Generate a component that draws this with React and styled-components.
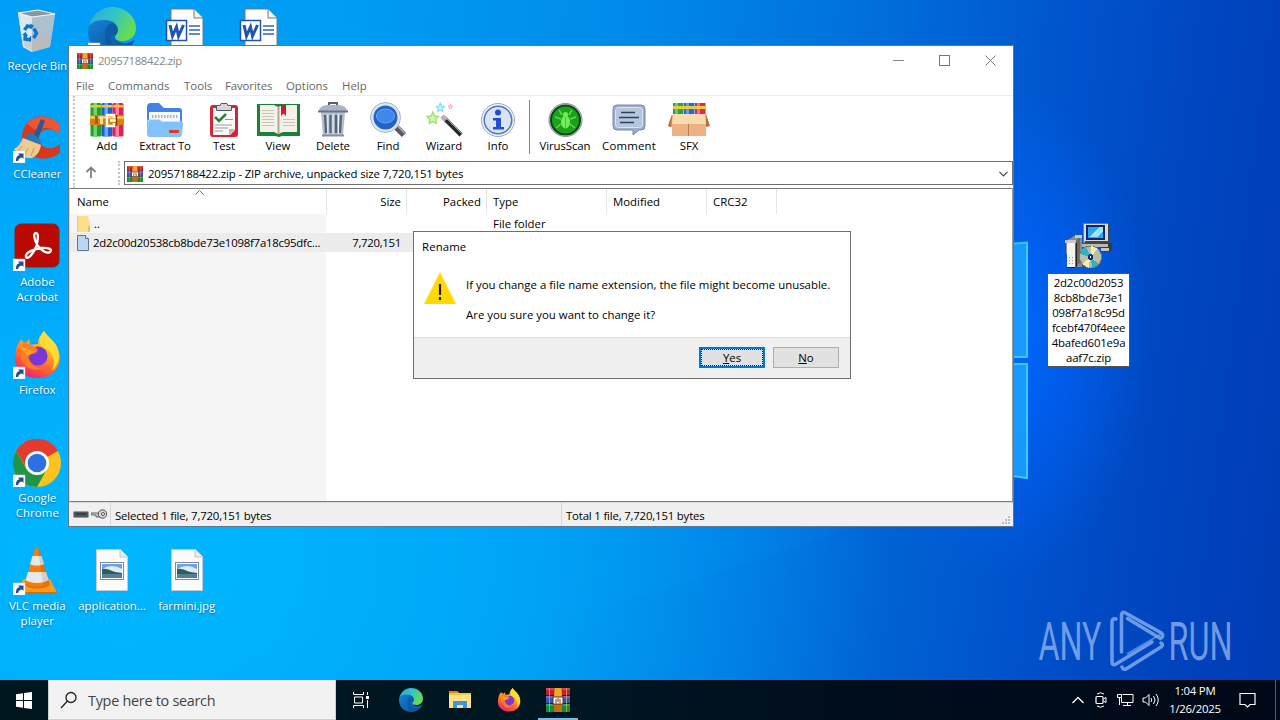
import React from 'react';
import styled, { createGlobalStyle, css } from 'styled-components';

const GlobalStyle = createGlobalStyle`
  * {
    box-sizing: border-box;
  }
  body {
    margin: 0;
    overflow: hidden;
    font-family: 'Open Sans', 'Noto Sans', sans-serif;
    font-size: 11.4px;
    line-height: 15px;
    color: #000;
  }
  svg {
    display: block;
    flex: none;
  }
`;

const Screen = styled.div`
  position: relative;
  display: flex;
  flex-direction: column;
  width: 1280px;
  height: 720px;
  overflow: hidden;
`;

const Desktop = styled.div`
  position: relative;
  height: 680px;
  background:
    radial-gradient(ellipse 150px 250px at 1000px 330px, rgba(0, 108, 255, .95), rgba(0, 100, 255, .6) 45%, rgba(0, 90, 240, 0) 100%),
    radial-gradient(ellipse 760px 560px at 130px 560px, rgba(0, 184, 255, .95), rgba(0, 180, 255, .6) 50%, rgba(0, 160, 255, 0) 100%),
    linear-gradient(97deg, #009ff7 0%, #009cf3 26%, #008bea 46%, #006fdc 64%, #0052cc 80%, #0044be 91%, #003cb4 100%);
`;

const Wallpaper = styled.svg`
  position: absolute;
  left: 0;
  top: 0;
`;

/* ---------- desktop icons ---------- */

const IconGrid = styled.div`
  position: relative;
  display: grid;
  grid-template-columns: repeat(4, 74.7px);
  grid-auto-rows: 108px;
  padding-top: 7px;
  width: 300px;
`;

const DesktopItem = styled.div`
  grid-column: ${props => props.$col};
  grid-row: ${props => props.$row};
  display: flex;
  flex-direction: column;
  align-items: center;
`;

const DesktopLabel = styled.div`
  margin-top: 3px;
  color: #fff;
  text-align: center;
  white-space: pre;
  letter-spacing: ${props => props.$ls || 0}px;
  text-shadow: 0 1px 2px rgba(0, 0, 0, .45);
`;

const InstallerItem = styled.div`
  position: absolute;
  left: 1047px;
  top: 221px;
  width: 83px;
  display: flex;
  flex-direction: column;
  align-items: center;
`;

const EditLabel = styled.div`
  width: 83px;
  margin-top: 4px;
  padding: 1px 0;
  border: 1px solid #555;
  background: #fff;
  text-align: center;
  white-space: pre;
  letter-spacing: -.18px;
`;

/* ---------- archive window ---------- */

const Window = styled.div`
  position: absolute;
  left: 68px;
  top: 45px;
  width: 946px;
  height: 482px;
  display: flex;
  flex-direction: column;
  border: 1px solid #5d7890;
  background: #fff;
`;

const TitleBar = styled.div`
  display: flex;
  align-items: center;
  height: 29px;
  padding: 0 17px 0 8px;
  color: #888;
`;

const Title = styled.div`
  flex: 1;
  margin-left: 5px;
  letter-spacing: -.4px;
`;

const WindowButtons = styled.div`
  display: flex;
  gap: 35px;
`;

const MenuBar = styled.div`
  display: flex;
  height: 21px;
  padding: 3px 7px 0;
  border-bottom: 1px solid #ececec;
  color: #666;
`;

const MenuItem = styled.div`
  width: ${props => props.$w}px;
  letter-spacing: ${props => props.$ls || 0}px;
`;

const Bars = styled.div`
  height: 92px;
  margin-left: 4px;
  border-left: 2px dotted #c6c6c6;
`;

const ToolBar = styled.div`
  display: flex;
  height: 65px;
  padding: 6px 0 0 5px;
`;

const Tool = styled.div`
  width: ${props => props.$w}px;
  display: flex;
  flex-direction: column;
  align-items: center;
  white-space: nowrap;
  letter-spacing: ${props => props.$ls || 0}px;
`;

const ToolDivider = styled.div`
  width: 1px;
  height: 54px;
  margin: -2px 5px 0 7px;
  background: #808080;
`;

const AddressRow = styled.div`
  display: flex;
  height: 24px;
`;

const UpButton = styled.div`
  width: 43px;
  padding: 5px 0 0 10px;
`;

const AddressGrip = styled.div`
  width: 6px;
  border-left: 2px dotted #c6c6c6;
`;

const AddressBox = styled.div`
  flex: 1;
  display: flex;
  align-items: center;
  padding: 1px 4px 0 2px;
  border: 1px solid #6e6e6e;
`;

const AddressText = styled.div`
  flex: 1;
  margin-left: 5px;
  letter-spacing: -.15px;
`;

const FileList = styled.div`
  flex: 1;
  position: relative;
  border: 1px solid #7c7c7c;
  border-right-color: #9a9a9a;
  border-left-color: #d8d8d8;
`;

const ListHeader = styled.div`
  display: flex;
  height: 25px;
`;

const HeadCell = styled.div`
  width: ${props => props.$w}px;
  padding: ${props => (props.$right ? '5px 5px 0 0' : '5px 0 0 6px')};
  border-right: 1px solid #e5e5e5;
  text-align: ${props => (props.$right ? 'right' : 'left')};

  &:first-child {
    padding-left: 7px;
  }
`;

const SortMark = styled.svg`
  position: absolute;
  left: 125px;
  top: 1px;
`;

const ListBody = styled.div`
  height: 287px;
  background: linear-gradient(90deg, #f5f5f5 256px, #fff 256px);
`;

const FileRow = styled.div`
  display: flex;
  align-items: center;
  width: 706px;
  height: 19px;
  ${props => props.$selected && css`
    background: #ececec;
  `}
`;

const FileCell = styled.div`
  display: flex;
  align-items: center;
  gap: 4px;
  width: ${props => props.$w}px;
  padding: 0 6px;
  white-space: nowrap;
  justify-content: ${props => (props.$right ? 'flex-end' : 'flex-start')};
  letter-spacing: ${props => props.$ls || 0}px;

  &:first-child {
    padding-left: 7px;
  }
`;

const StatusBar = styled.div`
  display: flex;
  height: 24px;
  border-top: 1px solid #d9d9d9;
  background: #f0f0f0;
`;

const StatusPart = styled.div`
  display: flex;
  width: ${props => props.$w}px;
  padding: ${props => props.$pad || '5px 4px 0'};
  gap: 2px;
  border-right: ${props => (props.$last ? 'none' : '1px solid #d5d5d5')};
  letter-spacing: -.18px;
`;

/* ---------- rename dialog ---------- */

const Dialog = styled.div`
  position: absolute;
  left: 413px;
  top: 231px;
  width: 438px;
  height: 148px;
  display: flex;
  flex-direction: column;
  border: 1px solid #6b6f74;
  background: #fff;
`;

const DialogTitle = styled.div`
  height: 32px;
  padding: 7px 8px 0;
  letter-spacing: .1px;
`;

const DialogBody = styled.div`
  flex: 1;
  display: flex;
  gap: 10px;
  padding: 8px 10px 0;
`;

const DialogText = styled.div`
  padding-top: 5px;
  white-space: nowrap;

  p {
    margin: 0 0 15px;
    letter-spacing: .01px;
  }
`;

const DialogFooter = styled.div`
  display: flex;
  justify-content: flex-end;
  gap: 8px;
  height: 41px;
  padding: 9px 11px 0;
  border-top: 1px solid #dfdfdf;
  background: #f0f0f0;
`;

const DialogButton = styled.div`
  width: 66px;
  height: 21px;
  border: 1px solid #adadad;
  background: #e1e1e1;
  line-height: 20px;
  text-align: center;

  u {
    text-underline-offset: 1px;
  }

  ${props => props.$focused && css`
    border: 2px solid #0078d7;
    outline: 1px dotted #222;
    outline-offset: -3px;
    line-height: 18px;
  `}
`;

/* ---------- taskbar ---------- */

const TaskBar = styled.div`
  display: flex;
  height: 40px;
  background: linear-gradient(90deg, #00161f, #001722 45%, #000e1d 62%, #000918 100%);
  color: #fff;
`;

const StartButton = styled.div`
  width: 48px;
  padding: 12px 0 0 16px;
`;

const SearchBox = styled.div`
  display: flex;
  align-items: center;
  width: 288px;
  padding-left: 11px;
  border: 1px solid #cfcfcf;
  border-top-color: #e4e4e4;
  background: #f2f2f2;
  color: #444;
  font-size: 14.4px;
  letter-spacing: -.27px;

  span {
    margin-left: 10px;
  }
`;

const TaskButton = styled.div`
  display: flex;
  align-items: center;
  justify-content: center;
  width: ${props => props.$w || 49}px;
`;

const ActiveTask = styled(TaskButton)`
  width: 40px;
  margin-left: 5px;
  border-top: 2px solid transparent;
  border-bottom: 2px solid #76b9ed;
`;

const Tray = styled.div`
  flex: 1;
  display: flex;
  justify-content: flex-end;
  align-items: center;
  padding-right: 4px;
`;

const TrayIcons = styled.div`
  display: flex;
  align-items: center;
  gap: 8px;
`;

const Clock = styled.div`
  width: 70px;
  text-align: center;
  line-height: 18px;
  letter-spacing: -.25px;
`;

const NotifyButton = styled.div`
  width: 46px;
  height: 40px;
  padding: 12px 0 0 9px;
  border-right: 1px solid #56606b;
`;

/* ---------- drawings ---------- */

const Shortcut = () => (
  <g>
    <rect x="0" y="36" width="12" height="12" fill="#fff" stroke="#cfd8e0" strokeWidth=".5" />
    <path d="M3 46c0-4 1.200-5.500 3.500-5.700L5 38.500h5.500v5.300L9 42.400c-2 .2-3.300 1.300-4 3.600z" fill="#1e4f91" />
  </g>
);

const RecycleBin = () => (
  <svg width="48" height="48" viewBox="1 0 48 48">
    <path d="M6 6l20-3 17 4-5 33-18 5-9-5z" fill="#d5dde3" fillOpacity=".85" />
    <path d="M6 6l14 4v35l-9-5z" fill="#e9eef2" fillOpacity=".75" />
    <path d="M20 10l23-3-5 33-18 5z" fill="#a9b8c2" fillOpacity=".7" />
    <path d="M6 6l20-3 17 4-23 3z" fill="#8b979f" stroke="#f4f7f9" />
    <path d="M11 31l1 8 8 5 17-4 1-10-12-2z" fill="#c6b8ae" fillOpacity=".5" />
    <g fill="none" stroke="#0a77cf" strokeWidth="3.400">
      <path d="M12.500 23l3-4 4 1M22 21.500l2.500 5-3 4.500M19 33l-6-1 .5-5" />
    </g>
    <path d="M18 16.500l4 2-2.500 4zM19 28.500v6l-3-2zM10 28l3.500-3 2.500 4z" fill="#0a77cf" />
  </svg>
);

const EdgeLogo = ({ size, shortcut }) => (
  <svg width={size} height={size} viewBox="0 0 48 48">
    <defs>
      <linearGradient id="edgeTop" x1="0" y1="0" x2="1" y2=".5">
        <stop offset="0" stopColor="#2aa8e0" />
        <stop offset=".5" stopColor="#2fc4c8" />
        <stop offset="1" stopColor="#67dc52" />
      </linearGradient>
      <linearGradient id="edgeLow" x1="0" y1="0" x2="1" y2="1">
        <stop offset="0" stopColor="#1583d8" />
        <stop offset="1" stopColor="#0b4d94" />
      </linearGradient>
    </defs>
    <path d="M0 24C0 14 8 9 17 9c10 0 14 7 14 13 0 4-3 5-3 8 0 4 5 6 9 6 4 0 7-2 9-3 1 0 1 1 0 2-4 8-12 13-22 13C10 48 0 38 0 24z" fill="url(#edgeLow)" />
    <path d="M17 26c0-5 3-9 8-10 4 2 6 5 6 8 0 3-3 4-3 7-1-2-1-4-3-4-4 0-5 14 12 16-4 3-8 5-13 5-5-4-8-13-7-22z" fill="#0b559f" fillOpacity=".7" />
    <path d="M1 20C3 8 13 0 24 0c14 0 24 10 24 21 0 8-6 13-13 13-6 0-8-2-8-4s3-3 3-7c0-6-6-10-13-10S3 14 1 20z" fill="url(#edgeTop)" />
    {shortcut && <Shortcut />}
  </svg>
);

const WordFile = () => (
  <svg width="48" height="48" viewBox="2 0 48 48">
    <path d="M10 2h23l9 9v36H10z" fill="#fff" stroke="#777" />
    <path d="M33 2v9h9" fill="#f3f3f3" stroke="#777" />
    <path d="M28 19h11M28 23h11M28 27h11" stroke="#2b63b8" strokeWidth="1.600" />
    <rect x="5.500" y="13.500" width="20" height="20" fill="#fff" stroke="#1f56ab" strokeWidth="1.500" />
    <path d="M9 18l2.500 11 4-9 2 9 5-11" fill="none" stroke="#1f56ab" strokeWidth="3" />
  </svg>
);

const CCleaner = () => (
  <svg width="48" height="48" viewBox="0 0 48 48">
    <path d="M46 9C33-5 9 1 9 23c0 19 21 27 38 15V29c-9 8-21 4-21-6 0-9 12-12 20-4z" fill="#d8371f" />
    <path d="M46 9C38-1 21-1 14 9l11 8c5-7 14-5 21 2z" fill="#ec5638" />
    <path d="M28 4l4 2-8 20-5-2z" fill="#225d93" />
    <path d="M13 20q5-3 9 0t6 7l-4 5-13-6z" fill="#2a78b6" />
    <path d="M10 23l18 7c-1 6-4 11-9 13-7 1-13-3-18-9 4-2 7-6 9-11z" fill="#eecb92" />
    <path d="M9 31l-4 5M15 33l-3 7M21 33l-3 8" stroke="#c99b5a" />
    <Shortcut />
  </svg>
);

const Acrobat = () => (
  <svg width="48" height="48" viewBox="0 0 48 48">
    <rect x="2" y="1" width="44" height="43" rx="6" fill="#b80a00" stroke="#90201a" />
    <path d="M23 10c-3 0-2 7 2 13 4 5 9 8 12 6s-1-5-9-4c-8 1-16 5-15 9 2 3 7-3 10-10 2-6 3-14 0-14z" fill="none" stroke="#fff" strokeWidth="2.300" />
    <Shortcut />
  </svg>
);

const Firefox = ({ size, shortcut }) => (
  <svg width={size} height={size} viewBox="0 0 48 48">
    <defs>
      <linearGradient id="foxBody" x1=".8" y1="0" x2=".3" y2="1">
        <stop offset="0" stopColor="#fff04a" />
        <stop offset=".35" stopColor="#ffb41f" />
        <stop offset=".65" stopColor="#ff6b2b" />
        <stop offset="1" stopColor="#ee1f70" />
      </linearGradient>
    </defs>
    <path d="M31 0c3 6 10 9 13 16 8 17-3 31-19 31C10 47 0 37 2 24c0-5 2-10 5-14l1-2c1 2 2 3 4 4 2-1 3-2 4-4l1 6c3-1 5-1 8-1 0-6 3-9 6-13z" fill="url(#foxBody)" />
    <path d="M31 0c3 6 10 9 13 16 4 10 1 18-5 24 4-10 1-18-6-22-4-2-6-4-6-8 0-4 2-7 4-10z" fill="#ffdc35" />
    <circle cx="25" cy="25" r="9.500" fill="#7a36d6" />
    <path d="M15 26c2-4 8-2 10-7l-3-3c-4-1-7-2-11-6-4 7-5 16 0 23 5 6 13 7 19 4-8 1-13-4-15-11z" fill="#ff7b24" />
    <path d="M7 16c6 0 8 4 15 4-3 2-4 4-8 4z" fill="#ffa322" />
    {shortcut && <Shortcut />}
  </svg>
);

const Chrome = () => (
  <svg width="48" height="48" viewBox="0 0 48 48">
    <circle cx="24" cy="24" r="24" fill="#fcc31e" />
    <path d="M24 24L3.200 12A24 24 0 0 1 44.800 12z" fill="#e33b2e" />
    <path d="M24 12h21a24 24 0 0 0-41.800 0L14 30z" fill="#e33b2e" />
    <path d="M3.200 12L13.600 30 24 36l10-6-10 18A24 24 0 0 1 3.200 12z" fill="#219447" />
    <circle cx="24" cy="24" r="12" fill="#fff" />
    <circle cx="24" cy="24" r="9.300" fill="#2b70e4" />
    <Shortcut />
  </svg>
);

const Vlc = () => (
  <svg width="48" height="48" viewBox="0 0 48 48">
    <path d="M10 32h27l7 14H6z" fill="#ff9b17" />
    <path d="M6 45h38v2H6z" fill="#d96c06" />
    <path d="M12 37c2 6 22 6 25 0l-4-9H16z" fill="#e56b05" />
    <path d="M21.500 3c1-2.500 4-2.500 5 0l9.500 33c-3 5-20 5-24 0z" fill="#f47d0d" />
    <path d="M19.500 9h9l2.500 8c-3 2-11 2-14 0zM15 25h18l2.500 8c-5 4-18 4-23 0z" fill="#e8e8e8" />
    <path d="M25 2c1 0 2 0 2 2l9 32-6 3z" fill="#7a3800" fillOpacity=".15" />
    <Shortcut />
  </svg>
);

const PictureFile = () => (
  <svg width="48" height="48" viewBox="0 0 48 48">
    <path d="M8.500 2.500h24l7 7v34h-31z" fill="#fbfbfb" stroke="#c2ccd2" />
    <path d="M32 2.500v7.500h7.500" fill="#e8eef1" stroke="#bcc6cc" />
    <rect x="12.500" y="15.500" width="23" height="17" fill="#fff" stroke="#7b8da0" />
    <rect x="14" y="17" width="20" height="14" fill="#6fa3e0" />
    <path d="M14 22q10-6 20 0v5H14z" fill="#dcecf8" />
    <path d="M14 22c7-1 8 3 20 4v2H14z" fill="#2e5f55" />
    <path d="M14 27h20v4H14z" fill="#517f9e" />
  </svg>
);

const Installer = () => (
  <svg width="48" height="48" viewBox="0 0 48 48" shapeRendering="crispEdges">
    <path d="M1 20l10-6h6v32H2z" fill="#8c8c84" />
    <path d="M2 22h8v24H2z" fill="#f4f4ee" />
    <path d="M10 20l5-5v27l-5 4z" fill="#6b6b66" />
    <path d="M0 19h11v3H0zM10 14h7v3h-7z" fill="#c9c9c1" />
    <path d="M1 46.500h9M11 22v24" stroke="#222" />
    <path d="M4 36h1M7 36h1M4 39h1M7 39h1M4 42h1M7 42h1" stroke="#999" />
    <path d="M35 22h12v6l-3 3h-6v-4h-3z" fill="#3c3c37" />
    <path d="M36 27h8v3h-8z" fill="#c6c6bd" />
    <path d="M18 2h26v19H18z" fill="#d9d9d2" stroke="#777" />
    <path d="M43 2h2v20H20v-2h23z" fill="#45453f" />
    <path d="M17 23h26v3H17z" fill="#b9b9b0" />
    <rect x="21" y="4" width="19" height="15" fill="#0d2480" />
    <rect x="23" y="6" width="15" height="11" fill="#29a9e5" />
    <path d="M25 16l9-10h4v4l-6 6z" fill="#9be5f8" />
    <circle cx="25.500" cy="36" r="11" fill="#b8c0ad" stroke="#777" />
    <path d="M25.500 36L15 33l2-5 4-3zM25.500 36l2 11 6-4z" fill="#2fb4bc" />
    <path d="M25.500 36l1-11 6 3zM25.500 36l-2 11-6-4z" fill="#f5f0a8" />
    <circle cx="25.500" cy="36" r="3" fill="#0d2b77" />
    <circle cx="25.500" cy="36" r="1" fill="#fff" />
  </svg>
);

const RarBooks = ({ size }) => (
  <svg width={size} height={size} viewBox="0 0 24 24">
    <rect width="24" height="8" fill="#c3202f" />
    <rect y="8" width="24" height="8" fill="#3b55b5" />
    <rect y="16" width="24" height="8" fill="#118a3a" />
    <path d="M0 1h24M0 9h24M0 17h24" stroke="#fff" strokeOpacity=".35" />
    <path d="M0 7.500h24M0 15.500h24" stroke="#2b1330" />
    <path d="M3.500 0v24M20.500 0v24" stroke="#e9c35a" strokeOpacity=".6" />
    <rect x="8" width="8" height="24" fill="#c66a1c" />
    <path d="M9 0h6l1 9H8z" fill="#f5a62c" />
    <rect x="7" y="9" width="10" height="7" fill="#fff" stroke="#6a2c12" />
    <path d="M10 15v-4M12 14v-4M14 15v-4" stroke="#7b3413" />
  </svg>
);

const AddIcon = () => (
  <svg width="36" height="36" viewBox="0 0 36 36">
    {[['#1f9e32', '#71d663', 1.500], ['#1d5fd0', '#6ba7f2', 12.500], ['#dc2252', '#ff7f9c', 23.500]].map(([dark, light, x]) => (
      <g key={x}>
        <rect x={x} y="1" width="11" height="33.500" rx="1.500" fill={dark} />
        <rect x={x + 3} y="1" width="3.500" height="33.500" fill={light} />
        <rect x={x} y="3" width="11" height="2.500" fill="#f0c62e" />
      </g>
    ))}
    <rect x="1" y="13" width="34" height="10" rx="1" fill="#d9820f" />
    <path d="M1 15.500h34" stroke="#ffcb55" strokeWidth="2.500" />
    <rect x="6" y="14" width="3" height="8" fill="#a95a06" />
    <rect x="11" y="14" width="3" height="8" fill="#f7dd97" />
    <path d="M25 16v-3h-7v11h7v-3M21 18.500h6" fill="none" stroke="#fff" strokeWidth="2.400" />
    <path d="M27.500 13v11" stroke="#8a4304" strokeWidth="1.500" />
  </svg>
);

const ExtractIcon = () => (
  <svg width="38" height="36" viewBox="0 0 38 36">
    <path d="M1 5q0-4 4-4h8l5 5h15q3 0 3 3v20H1z" fill="#4380ea" />
    <path d="M3 10h31v10H3z" fill="#f7f9fc" />
    <path d="M6 14.500h26" stroke="#aab4c3" strokeWidth="3" strokeDasharray="1.500 1.500" />
    <path d="M1 20q0-3 3-3h9l3 2h18q3 0 3 3l-1 10q0 3-3 3H4q-3 0-3-3z" fill="#82c2fc" />
    <path d="M2 20.500q0-3 3-3h8l3 2h18" fill="none" stroke="#c4e4ff" />
    <rect x="23" y="28" width="10" height="3" rx="1" fill="#df3c20" />
  </svg>
);

const TestIcon = () => (
  <svg width="36" height="36" viewBox="0 0 36 36">
    <rect x="4" y="3" width="28" height="32" rx="3" fill="#d32532" />
    <path d="M7 6h22v22l-5 5H7z" fill="#fafafa" />
    <path d="M29 27l-6 6v-6z" fill="#b9b9b9" />
    <path d="M10.500 3.500h3.500l1-2h6l1 2h3.500v5h-15z" fill="#d5d5d5" stroke="#51575f" />
    <path d="M9 15l4 4 7-7" fill="none" stroke="#228a37" strokeWidth="2.500" />
    <path d="M19 17.500h8M9 23h17M9 26h13M9 29h8" stroke="#999" />
  </svg>
);

const ViewIcon = () => (
  <svg width="43" height="36" viewBox="0 0 43 36">
    <path d="M0 2h43v32H25l-3 1-4-1H0z" fill="#188338" />
    <path d="M3 3h14l4 2 5-2h14v27H26l-5 2-4-2H3z" fill="#f4f1e9" />
    <path d="M21.500 5v27" stroke="#b7a78f" strokeWidth="2" />
    <path d="M5 8.500h12M5 11.500h12M5 14.500h12M5 17.500h12M5 20.500h12M5 23.500h12M26 17.500h12M26 20.500h12M26 23.500h12" stroke="#c9c4b9" />
    <path d="M24 3h5v11l-2.500-2.500L24 14z" fill="#d31631" />
  </svg>
);

const DeleteIcon = () => (
  <svg width="36" height="36" viewBox="0 0 36 36">
    <path d="M14 3V1h8v2" fill="none" stroke="#576171" strokeWidth="2" />
    <path d="M4 9q0-5 8-6h12q8 1 8 6z" fill="#a9b5c4" />
    <path d="M6 10h24l-2 24H8z" fill="#b3bfcd" />
    <path d="M10 13l1 18M15.500 13v18M21 13v18M26 13l-1 18" stroke="#56647a" strokeWidth="2.300" />
    <path d="M12.800 12v20M18 12v20M23.500 12v20" stroke="#edf3fa" />
    <path d="M3 9.500h30" stroke="#66748a" strokeWidth="2" />
    <path d="M7 32.500h22v2H7z" fill="#8390a3" />
  </svg>
);

const FindIcon = () => (
  <svg width="36" height="36" viewBox="0 0 36 36">
    <path d="M25 24l9 9" stroke="#555c66" strokeWidth="6" />
    <path d="M27 23.500l8 8" stroke="#aab0b9" strokeWidth="1.500" />
    <circle cx="15.500" cy="15.500" r="14" fill="#2462c6" />
    <circle cx="15.500" cy="15.500" r="13.500" fill="none" stroke="#dde5ef" strokeWidth="3" />
    <circle cx="15.500" cy="15.500" r="15" fill="none" stroke="#a6b5c8" />
    <ellipse cx="15.500" cy="14" rx="9" ry="7" fill="#3e88ea" stroke="#6aa5f4" />
  </svg>
);

const Star = ({ x, y, size, color }) => (
  <path
    transform={`translate(${x} ${y}) scale(${size})`}
    d="M5 0l1.500 3.500L10 4 7.500 6.500 8 10 5 8.200 2 10l.5-3.500L0 4l3.500-.5z"
    fill={color}
    fillOpacity=".45"
    stroke={color}
    strokeWidth="1.200"
  />
);

const WizardIcon = () => (
  <svg width="38" height="36" viewBox="0 0 38 36">
    <Star x={2} y={10} size={1.150} color="#9be36c" />
    <Star x={11} y={1} size={0.850} color="#7fdcf0" />
    <Star x={23} y={2} size={0.500} color="#f5a0aa" />
    <path d="M18 15l18 18" stroke="#282828" strokeWidth="4.500" />
    <path d="M19 14l18 18" stroke="#999" />
    <path d="M17 14l4 4" stroke="#b5b5b5" strokeWidth="4.500" />
  </svg>
);

const InfoIcon = () => (
  <svg width="36" height="36" viewBox="0 0 36 36">
    <circle cx="18" cy="18" r="16.500" fill="#f1f5fc" stroke="#9aa9c0" />
    <circle cx="18" cy="18" r="13.800" fill="#d9e4f8" stroke="#5276bd" strokeWidth="1.500" />
    <circle cx="18" cy="10.500" r="3" fill="#1f4fd0" />
    <path d="M13 16h8v9h3v2.500H13V25h3v-6.500h-3z" fill="#1f4fd0" />
  </svg>
);

const VirusIcon = () => (
  <svg width="36" height="36" viewBox="0 0 36 36">
    <circle cx="18.500" cy="18" r="16.500" fill="#d8ddd8" stroke="#828b84" />
    <circle cx="18.500" cy="18" r="14.500" fill="#19a31d" stroke="#0b4613" strokeWidth="2" />
    <g fill="none" stroke="#5fd84a" strokeWidth="1.500">
      <path d="M15 13l-3-5M22 13l3-5M14 17l-6-2M23 17l6-2M14 22l-5 4M23 22l5 4" />
    </g>
    <ellipse cx="18.500" cy="20" rx="4.500" ry="6.500" fill="#76e95d" />
    <circle cx="18.500" cy="12.500" r="2.500" fill="#76e95d" />
    <path d="M18.500 15v11" stroke="#4cc63c" />
  </svg>
);

const CommentIcon = () => (
  <svg width="36" height="36" viewBox="0 0 36 36">
    <path d="M6 3h24q4 0 4 4v17q0 4-4 4h-2l-6 5v-5H6q-4 0-4-4V7q0-4 4-4z" fill="#9cafca" stroke="#7488a5" />
    <rect x="4.500" y="5.500" width="27" height="20" rx="3" fill="#b5c5dc" stroke="#d9e4f1" />
    <path d="M10 10.500h14M8 15.500h20M9 20.500h14" stroke="#2f405c" strokeWidth="1.500" />
  </svg>
);

const SfxIcon = () => (
  <svg width="42" height="36" viewBox="0 0 42 36">
    {[['#26a53d', 5], ['#2866d5', 16], ['#dd294f', 27]].map(([color, x]) => (
      <g key={x}>
        <rect x={x} y="1" width="10.500" height="16" fill={color} />
        <rect x={x + 2} y="1" width="3" height="16" fill="#fff" fillOpacity=".35" />
        <rect x={x} y="4" width="10.500" height="3" fill="#efcb36" />
      </g>
    ))}
    <path d="M4 13h34l3 11-4 1v9H4v-9l-4-1z" fill="#dfa26f" />
    <path d="M5 12h32l1 10H4z" fill="#f8dcad" />
    <path d="M4 22h34v12H4z" fill="#eeb184" />
    <path d="M4 12L0 24l3 1zM38 12l4 12-4 1z" fill="#b8713c" />
    <path d="M20.500 22v12" stroke="#be7c48" />
  </svg>
);

const WindowsLogo = () => (
  <svg width="17" height="17" viewBox="0 0 17 17">
    <path d="M0 2.300l7-1V8H0zM8 1.100L16 0v8H8zM0 9h7v6.800l-7-1zM8 9h8v8l-8-1.100z" fill="#fff" />
  </svg>
);

const LAUNCHERS = [
  { col: 1, row: 1, icon: <RecycleBin />, label: 'Recycle Bin' },
  { col: 2, row: 1, icon: <EdgeLogo size={48} shortcut />, label: '' },
  { col: 3, row: 1, icon: <WordFile />, label: '' },
  { col: 4, row: 1, icon: <WordFile />, label: '' },
  { col: 1, row: 2, icon: <CCleaner />, label: 'CCleaner' },
  { col: 1, row: 3, icon: <Acrobat />, label: 'Adobe\nAcrobat' },
  { col: 1, row: 4, icon: <Firefox size={48} shortcut />, label: 'Firefox' },
  { col: 1, row: 5, icon: <Chrome />, label: 'Google\nChrome', ls: 0.1 },
  { col: 1, row: 6, icon: <Vlc />, label: 'VLC media\nplayer', ls: 0.1 },
  { col: 2, row: 6, icon: <PictureFile />, label: 'application...' },
  { col: 3, row: 6, icon: <PictureFile />, label: 'farmini.jpg' },
];

const MENU = [
  ['File', 32, 0],
  ['Commands', 76, 0.1],
  ['Tools', 41, 0],
  ['Favorites', 61, -0.1],
  ['Options', 56, 0],
  ['Help', 40, 0],
];

const TOOLS = [
  ['Add', 54, <AddIcon />],
  ['Extract To', 62, <ExtractIcon />, -0.15],
  ['Test', 56, <TestIcon />],
  ['View', 52, <ViewIcon />],
  ['Delete', 58, <DeleteIcon />, -0.1],
  ['Find', 52, <FindIcon />],
  ['Wizard', 60, <WizardIcon />],
  ['Info', 48, <InfoIcon />],
  null,
  ['VirusScan', 60, <VirusIcon />, -0.1],
  ['Comment', 68, <CommentIcon />, 0.2],
  ['SFX', 52, <SfxIcon />],
];

const ArchiveWindow = () => (
  <Window>
    <TitleBar>
      <RarBooks size={16} />
      <Title>20957188422.zip</Title>
      <WindowButtons>
        <svg width="11" height="11"><path d="M0 5.500h11" stroke="#888" /></svg>
        <svg width="11" height="11"><rect x=".5" y=".5" width="10" height="10" fill="none" stroke="#777" /></svg>
        <svg width="11" height="11"><path d="M.5.500l10 10M10.500.500l-10 10" stroke="#777" /></svg>
      </WindowButtons>
    </TitleBar>
    <MenuBar>
      {MENU.map(([name, w, ls]) => <MenuItem key={name} $w={w} $ls={ls}>{name}</MenuItem>)}
    </MenuBar>
    <Bars>
      <ToolBar>
        {TOOLS.map(tool => (tool
          ? <Tool key={tool[0]} $w={tool[1]} $ls={tool[3]}>{tool[2]}{tool[0]}</Tool>
          : <ToolDivider key="divider" />))}
      </ToolBar>
      <AddressRow>
        <UpButton>
          <svg width="12" height="13"><path d="M6 12V2M1.500 6L6 1.500 10.500 6" fill="none" stroke="#808080" strokeWidth="1.800" /></svg>
        </UpButton>
        <AddressGrip />
        <AddressBox>
          <RarBooks size={16} />
          <AddressText>20957188422.zip - ZIP archive, unpacked size 7,720,151 bytes</AddressText>
          <svg width="9" height="6"><path d="M.5.800l4 4 4-4" fill="none" stroke="#444" strokeWidth="1.200" /></svg>
        </AddressBox>
      </AddressRow>
    </Bars>
    <FileList>
      <SortMark width="9" height="5"><path d="M.5 4.500l4-4 4 4" fill="none" stroke="#777" /></SortMark>
      <ListHeader>
        <HeadCell $w={257}>Name</HeadCell>
        <HeadCell $w={80} $right>Size</HeadCell>
        <HeadCell $w={80} $right>Packed</HeadCell>
        <HeadCell $w={120}>Type</HeadCell>
        <HeadCell $w={100}>Modified</HeadCell>
        <HeadCell $w={70}>CRC32</HeadCell>
      </ListHeader>
      <ListBody>
        <FileRow>
          <FileCell $w={417}>
            <svg width="13" height="16">
              <path d="M0 0h11.500v4l1.500 1v11H0z" fill="#fbdf8c" />
              <path d="M11 10h2v6h-2z" fill="#efc04d" />
              <path d="M.5 0v16" stroke="#e9cb78" />
            </svg>
            ..
          </FileCell>
          <FileCell $w={120}>File folder</FileCell>
        </FileRow>
        <FileRow $selected>
          <FileCell $w={257} $ls={-0.23}>
            <svg width="12" height="16"><path d="M.5.500h8l3 3v12H.5z" fill="#b9d6f2" stroke="#60778e" /><path d="M8.500.500v3h3" fill="#fff" stroke="#60778e" /></svg>
            2d2c00d20538cb8bde73e1098f7a18c95dfc...
          </FileCell>
          <FileCell $w={80} $right $ls={-0.3}>7,720,151</FileCell>
        </FileRow>
      </ListBody>
    </FileList>
    <StatusBar>
      <StatusPart $w={42} $pad="6px 3px 0 4px">
        <svg width="16" height="11"><rect x=".5" y="2.500" width="15" height="6" rx="1" fill="#50575e" stroke="#999" /><path d="M3 5h10" stroke="#222" /></svg>
        <svg width="17" height="11"><path d="M0 4h9v4H5V6H0z" fill="#c9c9c9" stroke="#666" /><circle cx="11.500" cy="5" r="4.200" fill="#d5d5d5" stroke="#555" /><circle cx="12" cy="5" r="1.500" fill="#fff" stroke="#555" /></svg>
      </StatusPart>
      <StatusPart $w={451}>Selected 1 file, 7,720,151 bytes</StatusPart>
      <StatusPart $w={439} $last>Total 1 file, 7,720,151 bytes</StatusPart>
      <StatusPart $w={12} $last $pad="13px 1px 0">
        <svg width="9" height="9"><path d="M6 0h2v2H6zM3 3h2v2H3zM6 3h2v2H6zM0 6h2v2H0zM3 6h2v2H3zM6 6h2v2H6z" fill="#bdbdbd" /></svg>
      </StatusPart>
    </StatusBar>
  </Window>
);

const RenameDialog = () => (
  <Dialog>
    <DialogTitle>Rename</DialogTitle>
    <DialogBody>
      <svg width="32" height="32">
        <path d="M16 0l16 32H0z" fill="#ffd900" />
        <path d="M16 12v11M16 25v3" stroke="#1c1c1c" strokeWidth="2.200" />
      </svg>
      <DialogText>
        <p>If you change a file name extension, the file might become unusable.</p>
        <p>Are you sure you want to change it?</p>
      </DialogText>
    </DialogBody>
    <DialogFooter>
      <DialogButton $focused><u>Y</u>es</DialogButton>
      <DialogButton><u>N</u>o</DialogButton>
    </DialogFooter>
  </Dialog>
);

const WallpaperArt = () => (
  <Wallpaper width="1280" height="680">
    <defs>
      <linearGradient id="beam" x1="0" y1="0" x2="1" y2="0">
        <stop offset="0" stopColor="#0060d0" stopOpacity="0" />
        <stop offset="1" stopColor="#0058c8" stopOpacity=".16" />
      </linearGradient>
    </defs>
    <path d="M560 620Q760 560 1000 480V680H540z" fill="url(#beam)" />
    <g fill="#1ea8ff" fillOpacity=".8" stroke="#35ccff" strokeWidth="2">
      <path d="M990 246l37-3.500v114.500h-37z" />
      <path d="M990 364h37v114l-37-5z" />
    </g>
    <g fill="#9dbdf0" fillOpacity=".72" fontFamily="Roboto, sans-serif" fontSize="53">
      <text x="1038.500" y="660" textLength="63" lengthAdjust="spacingAndGlyphs">ANY</text>
      <text x="1168.500" y="660" textLength="64" lengthAdjust="spacingAndGlyphs">RUN</text>
    </g>
    <g fill="none" stroke="#86b0f0" strokeOpacity=".8" strokeWidth="3.500" strokeLinejoin="round" strokeLinecap="round">
      <path d="M1116 619q-4-1-4 3v40q0 4 4 2l36-22" />
      <path d="M1121.500 652v-37q0-4 4-2l36 20q3 3-1 5.500l-33-20" />
      <path d="M1161 643q3 2 0 4l-35 22q-3 1-4-2" />
    </g>
    <path d="M1127 654l34-20" fill="none" stroke="#86b0f0" strokeOpacity=".6" strokeWidth="2" />
  </Wallpaper>
);

const SystemTray = () => (
  <Tray>
    <TrayIcons>
      <svg width="14" height="8"><path d="M1.500 7l5.500-5.500L12.500 7" fill="none" stroke="#fff" strokeWidth="1.300" /></svg>
      <svg width="16" height="18" fill="none" stroke="#fff">
        <path d="M4 3Q7.500 .5 11 3M4 15Q7.500 17.500 11 15" />
        <rect x="3" y="5.500" width="7" height="7" rx="1" strokeWidth="1.200" />
        <path d="M10.500 8l2.500-1.500v5L10.500 10" />
      </svg>
      <svg width="17" height="14" fill="none" stroke="#fff">
        <path d="M5.500 1.500h10.500v8H4.500V5M10.500 9.500v3M6 12.500h8" />
        <path d="M.5 1.500h4v3h-4zM2.500 4.500v7.500" />
      </svg>
      <svg width="18" height="14" fill="none" stroke="#fff">
        <path d="M1 5h2.500L7 1.500v11L3.500 9H1zM9 5q1.500 2 0 4M11.500 3q3 4 0 8M14 1q4.500 6 0 12" />
      </svg>
    </TrayIcons>
    <Clock>1:04 PM<br />1/26/2025</Clock>
    <NotifyButton>
      <svg width="17" height="17"><path d="M1 1.500h15v11h-5L8.500 15 6 12.500H1z" fill="none" stroke="#fff" strokeWidth="1.200" /></svg>
    </NotifyButton>
  </Tray>
);

const App = () => (
  <>
    <GlobalStyle />
    <Screen>
      <Desktop>
        <WallpaperArt />
        <IconGrid>
          {LAUNCHERS.map(({ col, row, icon, label, ls }) => (
            <DesktopItem key={`${col}-${row}`} $col={col} $row={row}>
              {icon}
              <DesktopLabel $ls={ls}>{label}</DesktopLabel>
            </DesktopItem>
          ))}
        </IconGrid>
        <InstallerItem>
          <Installer />
          <EditLabel>{'2d2c00d2053\n8cb8bde73e1\n098f7a18c95d\nfcebf470f4eee\n4bafed601e9a\naaf7c.zip'}</EditLabel>
        </InstallerItem>
        <ArchiveWindow />
        <RenameDialog />
      </Desktop>
      <TaskBar>
        <StartButton><WindowsLogo /></StartButton>
        <SearchBox>
          <svg width="18" height="18"><circle cx="11" cy="6.500" r="5" fill="none" stroke="#222" strokeWidth="1.300" /><path d="M7.500 10L1 17" stroke="#222" strokeWidth="1.300" /></svg>
          <span>Type here to search</span>
        </SearchBox>
        <TaskButton $w={50}>
          <svg width="17" height="16" fill="none" stroke="#fff">
            <path d="M.5 0v2.500h10V0M.5 16v-2.500h10V16M1.500 5v6h8V5zM14.500 0v3M14.500 8v8" />
            <rect x="13" y="4" width="3" height="3" fill="#fff" stroke="none" />
          </svg>
        </TaskButton>
        <TaskButton><EdgeLogo size={24} /></TaskButton>
        <TaskButton>
          <svg width="22" height="20">
            <path d="M0 1h8l2 2h12v15H0z" fill="#f8c43c" />
            <path d="M0 1h8l2 2H0z" fill="#d98a1e" />
            <path d="M0 5h22v13H0z" fill="#fde08a" />
            <path d="M4 18v-7h14v7h-4v-3H8v3z" fill="#3d97dd" />
          </svg>
        </TaskButton>
        <TaskButton><Firefox size={24} /></TaskButton>
        <ActiveTask><RarBooks size={24} /></ActiveTask>
        <SystemTray />
      </TaskBar>
    </Screen>
  </>
);

export default App;
